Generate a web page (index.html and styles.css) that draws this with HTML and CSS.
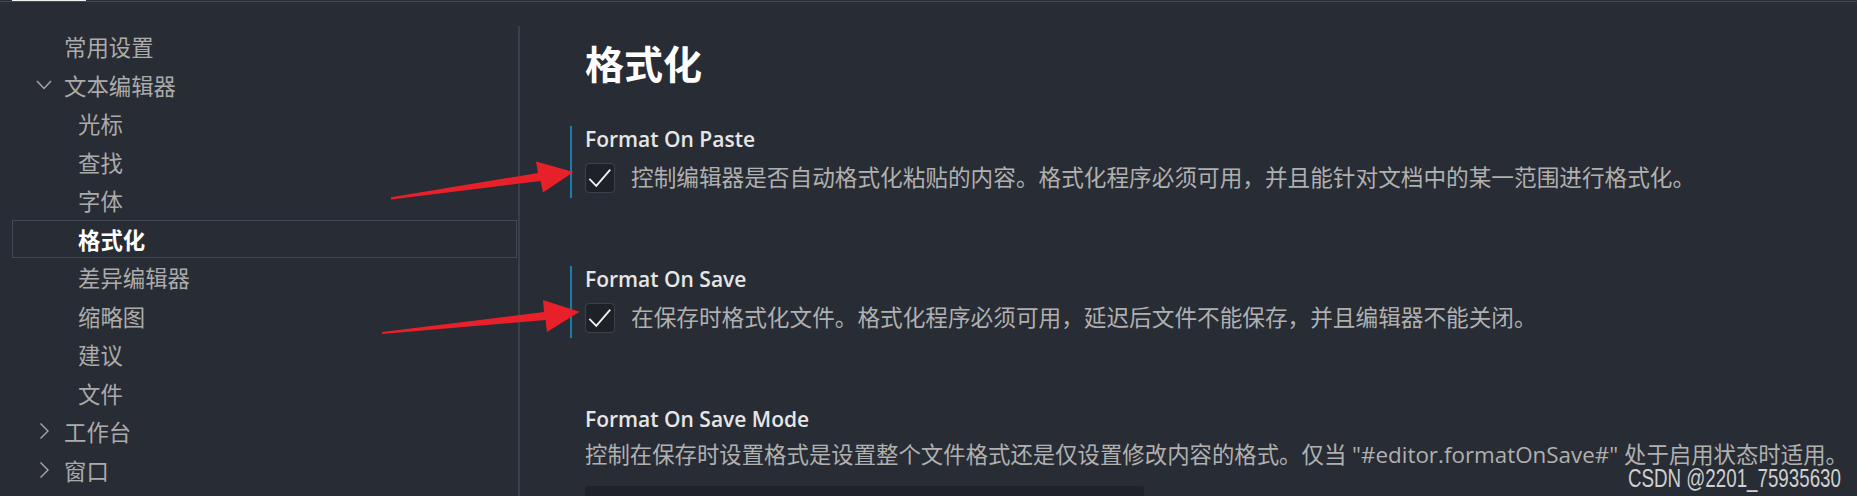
FILE: index.html
```html
<!DOCTYPE html>
<html lang="zh-CN">
<head>
<meta charset="utf-8">
<title>设置 - 格式化</title>
<link rel="stylesheet" href="styles.css">
</head>
<body>
<div class="tabs"><div class="tab-active"></div></div>
<div class="main">
  <nav class="toc">
    <div class="row l1">常用设置</div>
    <div class="row l1 has-chev"><svg class="chev" viewBox="0 0 16 16"><polyline points="1,4 8,11.5 15,4"/></svg><span>文本编辑器</span></div>
    <div class="row l2">光标</div>
    <div class="row l2">查找</div>
    <div class="row l2">字体</div>
    <div class="row l2 selected">格式化</div>
    <div class="row l2">差异编辑器</div>
    <div class="row l2">缩略图</div>
    <div class="row l2">建议</div>
    <div class="row l2">文件</div>
    <div class="row l1 has-chev"><svg class="chev" viewBox="0 0 16 16"><polyline points="4.5,0.5 12,8 4.5,15.5"/></svg><span>工作台</span></div>
    <div class="row l1 has-chev"><svg class="chev" viewBox="0 0 16 16"><polyline points="4.5,0.5 12,8 4.5,15.5"/></svg><span>窗口</span></div>
  </nav>
  <div class="divider"></div>
  <section class="content">
    <h1 class="page-title">格式化</h1>
    <div class="setting focused">
      <div class="s-title">Format On Paste</div>
      <div class="s-check">
        <span class="box"><svg viewBox="0 0 30 30"><polyline points="3.6,16 11,23.4 26,6"/></svg></span>
        <span class="desc">控制编辑器是否自动格式化粘贴的内容。格式化程序必须可用，并且能针对文档中的某一范围进行格式化。</span>
      </div>
    </div>
    <div class="setting focused">
      <div class="s-title">Format On Save</div>
      <div class="s-check">
        <span class="box"><svg viewBox="0 0 30 30"><polyline points="3.6,16 11,23.4 26,6"/></svg></span>
        <span class="desc">在保存时格式化文件。格式化程序必须可用，延迟后文件不能保存，并且编辑器不能关闭。</span>
      </div>
    </div>
    <div class="setting plain">
      <div class="s-title">Format On Save Mode</div>
      <div class="desc block">控制在保存时设置格式是设置整个文件格式还是仅设置修改内容的格式。仅当 "#editor.formatOnSave#" 处于启用状态时适用。</div>
      <div class="select"></div>
    </div>
  </section>
</div>
<svg class="annot" width="1857" height="496" viewBox="0 0 1857 496">
  <polygon points="391,197.2 538,173 536,161.5 573.5,172 543,192.5 540.5,181 391,199.4"/>
  <polygon points="382,332 544,312 543,300 579.5,311.7 547,332 545.5,320 382,334"/>
</svg>
<div class="watermark">CSDN @2201_75935630</div>
</body>
</html>
```

FILE: styles.css
```css
html, body {
  margin: 0;
  padding: 0;
}
body {
  width: 1857px;
  height: 496px;
  overflow: hidden;
  background: #282c34;
  color: #adadad;
  font-family: "Noto Sans CJK SC", "Noto Sans", sans-serif;
  position: relative;
}
.tabs {
  height: 1px;
  border-bottom: 1px solid #474a55;
}
.tab-active {
  margin-left: 12px;
  width: 74px;
  height: 1px;
  background: #f0f0f0;
}
.main {
  display: flex;
  margin-top: 24px;
  height: 470px;
}
.toc {
  width: 518px;
  flex: none;
  padding-top: 1px;
}
.row {
  height: 38.5px;
  box-sizing: border-box;
  display: flex;
  align-items: center;
  font-size: 22.4px;
  color: #ababab;
  white-space: nowrap;
}
.row.l1 { padding-left: 64px; }
.row.l1.has-chev { padding-left: 36px; }
.row.l2 { padding-left: 78px; }
.chev {
  width: 16px;
  height: 16px;
  margin-right: 12px;
  fill: none;
  stroke: #a8a8a8;
  stroke-width: 1.4;
}
.row.selected {
  margin-left: 12px;
  width: 505px;
  padding-left: 65px;
  border: 1px solid #444854;
  color: #ffffff;
  font-weight: 700;
}
.divider {
  width: 2px;
  flex: none;
  background: #3b3f4a;
}
.content {
  flex: 1;
  padding-left: 65px;
}
.page-title {
  margin: 17px 0 0 0;
  font-size: 39px;
  line-height: 39px;
  font-weight: 700;
  color: #ffffff;
}
.setting {
  margin-left: -15px;
  padding-left: 13px;
  border-left: 2px solid transparent;
  height: 72px;
}
.setting.focused {
  border-left-color: #1a7fa6;
}
.page-title + .setting { margin-top: 44px; }
.setting + .setting { margin-top: 68px; }
.s-title {
  font-family: "Open Sans", "Noto Sans CJK SC", sans-serif;
  font-weight: 600;
  font-size: 21px;
  line-height: 26px;
  color: #e6e6e6;
}
.s-check {
  margin-top: 11px;
  display: flex;
  align-items: center;
  gap: 16px;
}
.box {
  width: 30px;
  height: 30px;
  box-sizing: border-box;
  flex: none;
  border: 1px solid #3d414b;
  border-radius: 4px;
  background: #1e2127;
  display: flex;
}
.box svg {
  width: 28px;
  height: 28px;
  fill: none;
  stroke: #f2f2f2;
  stroke-width: 2;
}
.desc {
  font-family: "Open Sans", "Noto Sans CJK SC", sans-serif;
  font-size: 22.65px;
  line-height: 30px;
  color: #b0b0b0;
  white-space: nowrap;
}
.desc.block {
  margin-top: 8px;
  font-size: 22.4px;
}
.select {
  margin-top: 16px;
  width: 559px;
  height: 30px;
  background: #1f2329;
  border-radius: 3px;
}
.annot {
  position: absolute;
  left: 0;
  top: 0;
  fill: #e8202a;
  pointer-events: none;
}
.watermark {
  position: absolute;
  left: 1628px;
  top: 468px;
  font-family: "Liberation Sans", sans-serif;
  font-size: 25px;
  line-height: 20px;
  color: rgba(255, 255, 255, 0.78);
  transform: scaleX(0.75);
  transform-origin: left top;
  white-space: nowrap;
}
```
